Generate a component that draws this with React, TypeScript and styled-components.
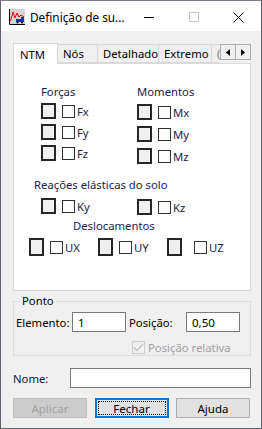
import styled, { createGlobalStyle } from "styled-components"

const GlobalStyle = createGlobalStyle`
    html, body {
        margin: 0;
        padding: 0;
        background: #f0f0f0;
    }
    * {
        box-sizing: border-box;
    }
`

const forces = ['Fx', 'Fy', 'Fz']
const moments = ['Mx', 'My', 'Mz']
const tabs = [
    { name: 'NTM', width: 45 },
    { name: 'Nós', width: 40 },
    { name: 'Detalhado', width: 61 },
    { name: 'Extremo', width: 53 },
]

export default function App() {
    return (
        <>
            <GlobalStyle />
            <StyledWindow>
                <TitleBar>
                    <AppIcon />
                    <Title>Definição de su...</Title>
                    <WinButton title="Minimizar">
                        <svg width="10" height="10" viewBox="0 0 10 10"><path d="M0 5.5h10" stroke="#000" strokeWidth="1" /></svg>
                    </WinButton>
                    <WinButton title="Maximizar">
                        <svg width="10" height="10" viewBox="0 0 10 10"><rect x="0.5" y="0.5" width="9" height="9" fill="none" stroke="#c8c8c8" /></svg>
                    </WinButton>
                    <WinButton title="Fechar">
                        <svg width="11" height="11" viewBox="0 0 11 11"><path d="M0.5 0.5l10 10M10.5 0.5l-10 10" stroke="#000" strokeWidth="1" /></svg>
                    </WinButton>
                </TitleBar>

                <Body>
                    <TabStrip>
                        {tabs.map((tab, idx) => (
                            <Tab key={tab.name} $active={idx === 0} $width={tab.width}>{tab.name}</Tab>
                        ))}
                        <TabCut>(</TabCut>
                        <TabScroll>
                            <ScrollBtn><svg width="4" height="7" viewBox="0 0 4 7"><path d="M4 0v7L0 3.5z" fill="#000" /></svg></ScrollBtn>
                            <ScrollBtn><svg width="4" height="7" viewBox="0 0 4 7"><path d="M0 0v7l4-3.5z" fill="#000" /></svg></ScrollBtn>
                        </TabScroll>
                    </TabStrip>

                    <TabPanel>
                        <Columns>
                            <Group>
                                <GroupTitle>Forças</GroupTitle>
                                {forces.map(name => (
                                    <OptionRow key={name}>
                                        <ColorBox />
                                        <Check />
                                        <OptLabel>{name}</OptLabel>
                                    </OptionRow>
                                ))}
                            </Group>
                            <Group>
                                <GroupTitle>Momentos</GroupTitle>
                                {moments.map(name => (
                                    <OptionRow key={name} $shift>
                                        <ColorBox />
                                        <Check />
                                        <OptLabel>{name}</OptLabel>
                                    </OptionRow>
                                ))}
                            </Group>
                        </Columns>

                        <SectionTitle $indent={34} $top={11}>Reações elásticas do solo</SectionTitle>
                        <Columns>
                            <OptionRow>
                                <ColorBox />
                                <Check />
                                <OptLabel>Ky</OptLabel>
                            </OptionRow>
                            <OptionRow $shift>
                                <ColorBox />
                                <Check />
                                <OptLabel>Kz</OptLabel>
                            </OptionRow>
                        </Columns>

                        <SectionTitle $indent={73} $top={1}>Deslocamentos</SectionTitle>
                        <DisplRow>
                            <OptionRow $wide>
                                <ColorBox $tall />
                                <Check />
                                <OptLabel>UX</OptLabel>
                            </OptionRow>
                            <OptionRow $wide>
                                <ColorBox $tall />
                                <Check />
                                <OptLabel>UY</OptLabel>
                            </OptionRow>
                            <OptionRow $wide $gap={12}>
                                <ColorBox $tall />
                                <Check />
                                <OptLabel>UZ</OptLabel>
                            </OptionRow>
                        </DisplRow>
                    </TabPanel>

                    <Fieldset>
                        <Legend>Ponto</Legend>
                        <FieldRow>
                            <FieldLabel $width={56}>Elemento:</FieldLabel>
                            <TextInput $width={54} defaultValue="1" />
                            <FieldLabel $width={60} $pad={3}>Posição:</FieldLabel>
                            <TextInput $width={54} defaultValue="0,50" />
                        </FieldRow>
                        <RelRow>
                            <DisabledCheck>
                                <svg width="11" height="9" viewBox="0 0 11 9"><path d="M1 4.5l3 3L10 1" fill="none" stroke="#c2c2c2" strokeWidth="1.3" /></svg>
                            </DisabledCheck>
                            <DisabledText>Posição relativa</DisabledText>
                        </RelRow>
                    </Fieldset>

                    <NameRow>
                        <FieldLabel $width={57} $navy>Nome:</FieldLabel>
                        <TextInput $width={182} />
                    </NameRow>

                    <ButtonRow>
                        <Button disabled>Aplicar</Button>
                        <Button $focused><FocusRect>Fechar</FocusRect></Button>
                        <Button>Ajuda</Button>
                    </ButtonRow>
                </Body>
            </StyledWindow>
        </>
    )
}

function AppIcon() {
    return (
        <IconWrap>
            <svg width="16" height="16" viewBox="0 0 16 16">
                <rect x="0" y="0" width="16" height="16" fill="#d4d4d4" />
                <path d="M0.5 0v15.5H16" fill="none" stroke="#000" strokeWidth="1" />
                <path d="M1.5 12L4 3l2 6 2-5 2 4 2-2 3 2" fill="none" stroke="#e00000" strokeWidth="1" />
                <rect x="7" y="10" width="6" height="3" fill="#1030d0" />
                <rect x="12" y="8" width="3" height="5" fill="#1030d0" />
                <circle cx="8.5" cy="13.5" r="1" fill="#000" />
                <circle cx="13" cy="13.5" r="1" fill="#000" />
            </svg>
        </IconWrap>
    )
}


const StyledWindow = styled.div`
    width: 262px;
    height: 429px;
    border: 1px solid #5f6470;
    border-top-color: #7a7f8a;
    background: #f0f0f0;
    font-family: "Noto Sans", "Open Sans", sans-serif;
    font-size: 11.3px;
    color: #000;
    display: flex;
    flex-direction: column;
    overflow: hidden;
`

const TitleBar = styled.div`
    height: 30px;
    background: #fff;
    display: flex;
    align-items: center;
    flex-shrink: 0;
`

const IconWrap = styled.div`
    width: 16px;
    height: 16px;
    margin: 2px 5px 0 8px;
    display: flex;
`

const Title = styled.div`
    flex: 1;
    font-size: 11.8px;
    padding-top: 1px;
    white-space: nowrap;
`

const WinButton = styled.div`
    width: 45px;
    height: 30px;
    display: flex;
    align-items: center;
    justify-content: center;
    padding-top: 2px;
`

const Body = styled.div`
    flex: 1;
    display: flex;
    flex-direction: column;
    padding: 11px 10px 0 12px;
`

const TabStrip = styled.div`
    display: flex;
    align-items: flex-end;
    height: 21px;
    position: relative;
    z-index: 1;
`

const Tab = styled.div<{ $active?: boolean; $width: number }>`
    width: ${({ $width }) => $width}px;
    height: ${({ $active }) => ($active ? '21px' : '19px')};
    padding-left: ${({ $active }) => ($active ? '6px' : '5px')};
    margin-bottom: ${({ $active }) => ($active ? '-1px' : '0')};
    background: ${({ $active }) => ($active ? '#fff' : '#f0f0f0')};
    border: 1px solid #d9d9d9;
    border-bottom: ${({ $active }) => ($active ? 'none' : '1px solid #d9d9d9')};
    border-left: ${({ $active }) => ($active ? '1px solid #d9d9d9' : 'none')};
    display: flex;
    align-items: center;
    white-space: nowrap;
    flex-shrink: 0;
`

const TabCut = styled.div`
    width: 8px;
    height: 19px;
    overflow: hidden;
    border-top: 1px solid #d9d9d9;
    border-bottom: 1px solid #d9d9d9;
    padding-left: 5px;
    color: #777;
    display: flex;
    align-items: center;
    font-size: 11px;
    flex-shrink: 0;
`

const TabScroll = styled.div`
    display: flex;
    align-self: flex-start;
    margin-top: 2px;
`

const ScrollBtn = styled.div`
    width: 16px;
    height: 16px;
    background: #f0f0f0;
    border: 1px solid #adadad;
    display: flex;
    align-items: center;
    justify-content: center;

    & + & {
        margin-left: -1px;
    }
`

const TabPanel = styled.div`
    height: 228px;
    background: #fff;
    border: 1px solid #d9d9d9;
    padding: 20px 0 0 27px;
    color: #1c1c4a;
`

const Columns = styled.div`
    display: flex;
`

const Group = styled.div`
    width: 96px;
    display: flex;
    flex-direction: column;
`

const GroupTitle = styled.div`
    height: 16px;
    line-height: 16px;
`

const SectionTitle = styled.div<{ $indent: number; $top: number }>`
    height: 16px;
    line-height: 16px;
    margin: ${({ $top }) => $top}px 0 2px ${({ $indent }) => $indent - 41}px;
`

const OptionRow = styled.div<{ $shift?: boolean; $wide?: boolean; $gap?: number }>`
    width: ${({ $wide }) => ($wide ? '69px' : '96px')};
    height: 21px;
    display: flex;
    align-items: center;
    margin-top: ${({ $shift }) => ($shift ? '1px' : '0')};

    & > span:nth-child(2) {
        margin-left: ${({ $gap }) => ($gap ? `${$gap}px` : '6px')};
    }
`

const ColorBox = styled.span<{ $tall?: boolean }>`
    width: 15px;
    height: ${({ $tall }) => ($tall ? '18px' : '16px')};
    background: #f0f0f0;
    border: 2px solid #262626;
    flex-shrink: 0;
`

const Check = styled.span`
    width: 13px;
    height: 13px;
    background: #fff;
    border: 1px solid #333;
    margin-top: 2px;
    flex-shrink: 0;
`

const OptLabel = styled.span`
    margin-left: 2px;
    margin-top: 1px;
`

const DisplRow = styled.div`
    display: flex;
    margin: 1px 0 0 -12px;
`

const Fieldset = styled.div`
    position: relative;
    height: 55px;
    margin-top: 10px;
    border: 1px solid #dcdcdc;
    padding: 10px 0 0 2px;
`

const Legend = styled.div`
    position: absolute;
    top: -9px;
    left: 6px;
    padding: 0 2px;
    background: #f0f0f0;
    line-height: 16px;
`

const FieldRow = styled.div`
    display: flex;
    align-items: center;
`

const FieldLabel = styled.div<{ $width: number; $pad?: number; $navy?: boolean }>`
    width: ${({ $width }) => $width}px;
    padding-left: ${({ $pad }) => ($pad ? `${$pad}px` : '0')};
    color: ${({ $navy }) => ($navy ? '#14143c' : '#000')};
    white-space: nowrap;
    flex-shrink: 0;
`

const TextInput = styled.input<{ $width: number }>`
    width: ${({ $width }) => $width}px;
    height: 20px;
    border: 1px solid #7a7a7a;
    background: #fff;
    font-family: inherit;
    font-size: 11.5px;
    padding: 0 0 0 5px;
    outline: none;
    color: #000;
`

const RelRow = styled.div`
    display: flex;
    align-items: center;
    margin: 8px 0 0 116px;
`

const DisabledCheck = styled.span`
    width: 13px;
    height: 13px;
    border: 1px solid #cccccc;
    background: #f0f0f0;
    display: flex;
    align-items: center;
    justify-content: center;
`

const DisabledText = styled.span`
    color: #a0a0a0;
    margin-left: 3px;
`

const NameRow = styled.div`
    display: flex;
    align-items: center;
    margin-top: 12px;
`

const ButtonRow = styled.div`
    display: flex;
    justify-content: space-between;
    margin-top: 10px;
    padding-right: 1px;
`

const Button = styled.button<{ $focused?: boolean }>`
    width: 74px;
    height: 20px;
    font-family: inherit;
    font-size: 11.5px;
    background: #e1e1e1;
    border: 1px solid #adadad;
    color: #000;
    padding: 0;
    display: flex;
    align-items: center;
    justify-content: center;

    &:disabled {
        background: #cccccc;
        border-color: #bfbfbf;
        color: #a0a0a0;
    }

    ${({ $focused }) => $focused && `
        border: 2px solid #0078d7;
        padding: 1px;
    `}
`

const FocusRect = styled.span`
    width: 100%;
    height: 100%;
    border: 1px dotted #000;
    display: flex;
    align-items: center;
    justify-content: center;
`
